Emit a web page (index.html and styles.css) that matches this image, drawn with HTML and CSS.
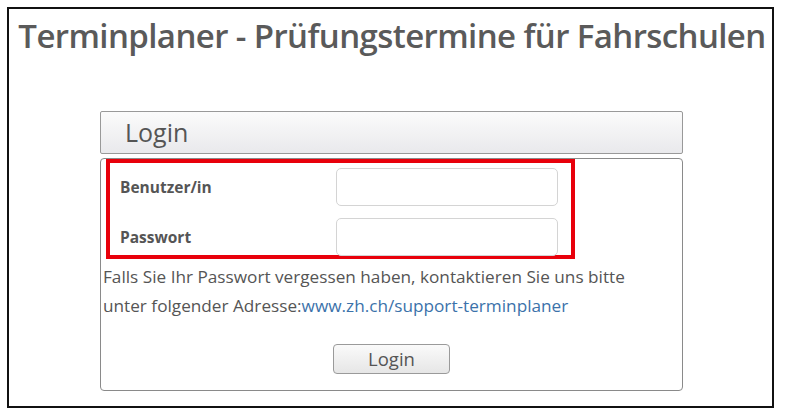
FILE: index.html
```html
<!DOCTYPE html>
<html lang="de">
<head>
<meta charset="utf-8">
<title>Terminplaner</title>
<link rel="stylesheet" href="styles.css">
</head>
<body>
<div class="frame">
  <h1 class="title">Terminplaner - Prüfungstermine für Fahrschulen</h1>
  <div class="panel">
    <div class="panel-head">Login</div>
    <div class="panel-body">
      <div class="highlight">
        <div class="row">
          <label class="label" for="user">Benutzer/in</label>
          <input class="field" id="user" type="text">
        </div>
        <div class="row">
          <label class="label" for="pw">Passwort</label>
          <input class="field" id="pw" type="password">
        </div>
      </div>
      <p class="note">Falls Sie Ihr Passwort vergessen haben, kontaktieren Sie uns bitte unter folgender Adresse:<a class="link" href="#">www.zh.ch/support-terminplaner</a></p>
      <div class="actions">
        <button class="btn" type="button">Login</button>
      </div>
    </div>
  </div>
</div>
</body>
</html>
```

FILE: styles.css
```css
* { box-sizing: border-box; }
html, body { margin: 0; padding: 0; background: #fff; }
body {
  font-family: "Open Sans", "Noto Sans", sans-serif;
  color: #555;
}
.frame {
  margin: 7px 0 0 7px;
  width: 767px;
  height: 401px;
  border: 2px solid #111;
  padding-top: 6px;
}
.title {
  margin: 0;
  padding-left: 3px;
  text-align: center;
  font-size: 33px;
  font-weight: 600;
  color: #5a5a5a;
  letter-spacing: -0.6px;
  line-height: 42px;
}
.panel {
  width: 583px;
  margin: 54px auto 0 91px;
}
.panel-head {
  height: 43px;
  border: 1px solid #999;
  border-radius: 2px;
  background: linear-gradient(#fbfbfb, #e9e9ec);
  padding-left: 24px;
  font-size: 25px;
  line-height: 41px;
  color: #555;
}
.panel-body {
  margin-top: 4px;
  height: 233px;
  border: 1px solid #8a8a8a;
  border-radius: 4px;
  padding: 0 2px;
}
.highlight {
  width: 469px;
  margin-left: 3px;
  border: 4px solid #e8000b;
  padding: 5px 13px 0 10px;
  height: 100px;
}
.row {
  display: flex;
  align-items: center;
  justify-content: space-between;
}
.row + .row { margin-top: 12px; }
.label {
  font-weight: 700;
  font-size: 15.5px;
  color: #555;
}
.field {
  width: 222px;
  height: 38px;
  border: 1px solid #d4d4d4;
  border-radius: 5px;
  background: #fff;
  margin: 0;
}
.note {
  margin: 3px 0 0;
  font-size: 17.2px;
  line-height: 29px;
  color: #555;
  width: 560px;
}
.link { color: #3b72aa; text-decoration: none; }
.actions {
  display: flex;
  justify-content: center;
  margin-top: 24px;
}
.btn {
  width: 117px;
  height: 30px;
  border: 1px solid #9a9a9a;
  border-radius: 4px;
  background: linear-gradient(#fafafa, #e6e6e6);
  font-family: "Open Sans", "Noto Sans", sans-serif;
  font-size: 18.5px;
  color: #555;
  padding: 0;
  line-height: 28px;
}
```
